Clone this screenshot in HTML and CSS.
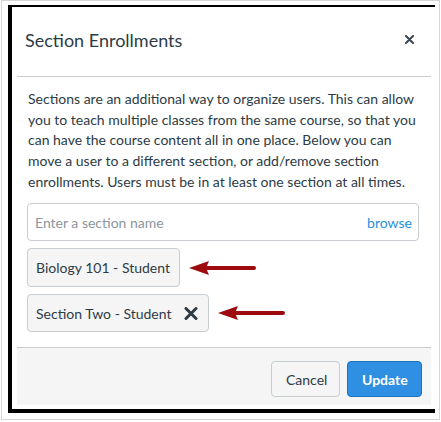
FILE: index.html
```html
<!DOCTYPE html>
<html lang="en">
<head>
  <meta charset="UTF-8" />
  <title>Section Enrollments</title>
  <link rel="stylesheet" href="styles.css">
</head>
<body>
  <div class="shot">
    <div class="frame">
      <div class="dialog">
        <div class="dialog-header">
          <h2>Section Enrollments</h2>
          <svg class="close" width="9" height="9" viewBox="0 0 9 9"><path d="M1 1L8 8M8 1L1 8" stroke="#3a4650" stroke-width="2" stroke-linecap="round"/></svg>
        </div>
        <div class="dialog-body">
          <p>Sections are an additional way to organize users. This can allow you to teach multiple classes from the same course, so that you can have the course content all in one place. Below you can move a user to a different section, or add/remove section enrollments. Users must be in at least one section at all times.</p>
          <div class="search">
            <span class="placeholder">Enter a section name</span>
            <span class="browse">browse</span>
          </div>
          <div class="pill-row">
            <div class="pill">Biology 101 - Student</div>
            <svg class="arrow" width="68" height="16" viewBox="0 0 68 16"><path d="M0 8L20 1L17 8L20 15Z" fill="#9e0b0f"/><path d="M17 8H65" stroke="#9e0b0f" stroke-width="4" stroke-linecap="round"/></svg>
          </div>
          <div class="pill-row">
            <div class="pill">Section Two - Student
              <svg class="remove" width="14" height="13" viewBox="0 0 14 13"><path d="M2 1.5L12 11.5M12 1.5L2 11.5" stroke="#2d3b45" stroke-width="3" stroke-linecap="round"/></svg>
            </div>
            <svg class="arrow" width="68" height="16" viewBox="0 0 68 16"><path d="M0 8L20 1L17 8L20 15Z" fill="#9e0b0f"/><path d="M17 8H65" stroke="#9e0b0f" stroke-width="4" stroke-linecap="round"/></svg>
          </div>
        </div>
        <div class="dialog-footer">
          <button class="btn cancel">Cancel</button>
          <button class="btn update">Update</button>
        </div>
      </div>
    </div>
  </div>
</body>
</html>
```

FILE: styles.css
```css
body { margin: 0; background: #fff; font-family: Lato, "Liberation Sans", sans-serif; color: #2d3b45; }
.shot { box-sizing: border-box; width: 439px; height: 420px; margin-left: 1px; border: 1px solid #d6d6d6; padding: 4px 4px 5px 6px; }
.frame { height: 408px; box-sizing: border-box; border-left: 4px solid #000; border-top: 2px solid #000; border-bottom: 4px solid #000; padding: 0 4px 4px 5px; }
.dialog { height: 398px; display: flex; flex-direction: column; }
.dialog-header { height: 70px; flex: none; box-sizing: border-box; display: flex; align-items: center; justify-content: space-between; padding: 0 17px 4px 8px; border-bottom: 1px solid #c7cdd1; }
.dialog-header h2 { margin: 0; font-size: 18px; font-weight: 400; }
.close { display: block; }
.dialog-body { flex: 1; padding: 12px 12px 0 10px; }
.dialog-body p { margin: 0 0 11px 1px; font-size: 14px; line-height: 20.67px; }
.search { height: 38px; box-sizing: border-box; border: 1px solid #c7cdd1; border-radius: 4px; display: flex; align-items: center; justify-content: space-between; padding: 0 6px 0 7px; font-size: 14px; }
.placeholder { color: #8b969e; }
.browse { color: #1f8fd9; }
.pill-row { display: flex; align-items: center; margin-top: 7px; }
.pill { height: 39px; box-sizing: border-box; display: flex; align-items: center; gap: 12px; padding: 0 9px 0 8px; background: #f5f5f5; border: 1px solid #c7cdd1; border-radius: 4px; font-size: 14px; }
.pill-row + .pill-row .pill { height: 38px; padding-right: 10px; }
.remove { display: block; }
.arrow { display: block; margin-left: 9px; }
.dialog-footer { height: 58px; flex: none; box-sizing: border-box; border-top: 1px solid #c7cdd1; background: #f5f5f5; display: flex; justify-content: flex-end; align-items: flex-start; gap: 7px; padding: 13px 9px 0 0; }
.btn { height: 36px; border-radius: 4px; font-family: inherit; font-size: 14px; padding: 0 14px; }
.cancel { width: 69px; background: #f5f5f5; border: 1px solid #c7cdd1; color: #2d3b45; }
.update { width: 75px; background: #2f8fe3; border: 1px solid #1b72bf; color: #fff; font-weight: 700; }
```
